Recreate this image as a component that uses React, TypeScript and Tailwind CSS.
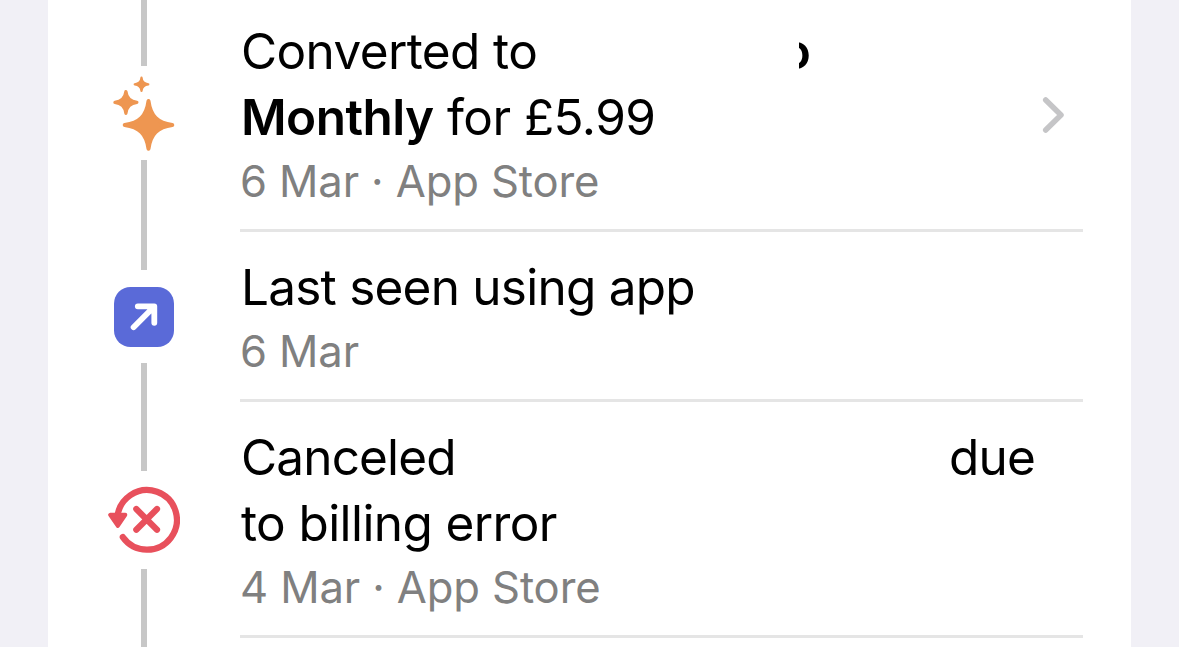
import type { ReactNode } from "react";

function SparklesIcon() {
  return (
    <svg width="72" height="80" viewBox="0 0 72 80" fill="#EE9651" stroke="#EE9651" strokeLinejoin="round">
      <path strokeWidth="4" d="M40.500 28C42.500 43 49.500 50 64.300 52C49.500 54 42.500 61 40.500 75.700C38.500 61 31.500 54 16.700 52C31.500 50 38.500 43 40.500 28Z" />
      <path strokeWidth="3.200" d="M17.900 18.500C18.700 25.400 21.900 28.600 28.900 29.400C21.900 30.200 18.700 33.400 17.900 40.300C17.100 33.400 13.900 30.200 6.900 29.400C13.900 28.600 17.100 25.400 17.900 18.500Z" />
      <path strokeWidth="2.200" d="M33.500 4.700C33.900 9.100 35.700 10.900 40.300 11.300C35.700 11.700 33.900 13.500 33.500 17.900C33.100 13.500 31.300 11.700 26.700 11.300C31.300 10.900 33.100 9.100 33.500 4.700Z" />
    </svg>
  );
}

function OpenIcon() {
  return (
    <svg width="60" height="60" viewBox="0 0 60 60" fill="none">
      <rect width="60" height="60" rx="16.500" fill="#5A6AD8" />
      <path d="M19.600 40.200L39 20.800M23.800 19.300H40.300V35.800" stroke="#fff" strokeWidth="5.800" strokeLinecap="round" strokeLinejoin="round" />
    </svg>
  );
}

function BillingErrorIcon() {
  return (
    <svg width="72" height="68" viewBox="0 0 72 68" fill="none" stroke="#E8505C" strokeLinecap="round" strokeLinejoin="round">
      <path d="M9.300 32.800A29.800 29.800 0 1 1 14.800 51.100" strokeWidth="6.200" />
      <path d="M2.200 28.800H17.300L9.800 40Z" strokeWidth="4" fill="#E8505C" />
      <path d="M28.300 23L49 43.700M49 23L28.300 43.700" strokeWidth="6.200" />
    </svg>
  );
}

function Chevron() {
  return (
    <svg width="24" height="38" viewBox="0 0 24 38" fill="none">
      <path d="M4.700 4L20 19L4.700 34" stroke="#C5C5C7" strokeWidth="5.500" strokeLinecap="round" strokeLinejoin="round" />
    </svg>
  );
}

type EventProps = {
  icon: ReactNode;
  railTop: string;
  railGap: string;
  detail: string;
  link?: boolean;
  children: ReactNode;
};

function TimelineEvent({ icon, railTop, railGap, detail, link, children }: EventProps) {
  return (
    <li className="flex shrink-0">
      <div className="flex w-48 shrink-0 flex-col items-center">
        <div className={`w-1.5 shrink-0 bg-[#C7C7C7] ${railTop}`} />
        <div className={`flex shrink-0 items-center justify-center ${railGap}`}>{icon}</div>
        <div className="w-1.5 flex-1 bg-[#C7C7C7]" />
      </div>
      <div className="mr-12 flex min-w-0 flex-1 items-center border-b-[3px] border-[#E5E5E5] pt-[22px] pb-[17px]">
        <div className="min-w-0 flex-1 whitespace-nowrap">
          <div className="pl-px text-[49.5px] leading-[66px] text-black">{children}</div>
          <div className="pt-0.5 text-[43.6px] leading-[60px] tracking-[-0.12px] text-[#808080]">{detail}</div>
        </div>
        {link && (
          <div className="mr-[18px]">
            <Chevron />
          </div>
        )}
      </div>
    </li>
  );
}

export default function App() {
  return (
    <main className="h-[647px] w-[1179px] overflow-hidden bg-[#F1F0F6] px-12 font-['Inter',sans-serif]">
      <ul className="-mt-1 flex h-[651px] flex-col overflow-hidden bg-white">
        <TimelineEvent icon={<SparklesIcon />} railTop="h-[70px]" railGap="h-[94px]" detail="6 Mar · App Store" link>
          <div className="flex h-[66px]">
            <span className="w-[558px] tracking-[-0.62px]">Converted to</span>
            <span className="flex w-3 justify-end overflow-hidden font-semibold">o</span>
          </div>
          <div className="tracking-[-0.55px]">
            <span className="font-semibold">Monthly</span> for £5.99
          </div>
        </TimelineEvent>
        <TimelineEvent icon={<OpenIcon />} railTop="h-[38px]" railGap="h-[93px]" detail="6 Mar">
          <div className="tracking-[-0.77px]">Last seen using app</div>
        </TimelineEvent>
        <TimelineEvent icon={<BillingErrorIcon />} railTop="h-[69px]" railGap="h-[98px]" detail="4 Mar · App Store">
          <div className="flex tracking-[-0.85px]">
            <span className="w-[708px]">Canceled</span>
            <span>due</span>
          </div>
          <div className="tracking-[-0.6px]">to billing error</div>
        </TimelineEvent>
        <li className="flex flex-1">
          <div className="flex w-48 justify-center">
            <div className="w-1.5 bg-[#C7C7C7]" />
          </div>
        </li>
      </ul>
    </main>
  );
}
